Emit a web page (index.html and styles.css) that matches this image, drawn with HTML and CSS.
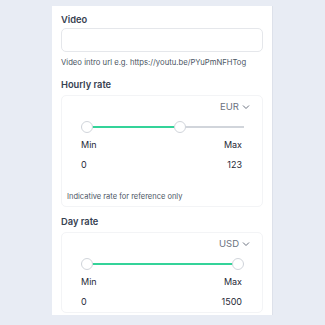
FILE: index.html
```html
<!DOCTYPE html>
<html lang="en">

<head>
    <meta charset="UTF-8">
    <meta name="viewport" content="width=device-width, initial-scale=1.0">
    <title>Rates</title>
    <link rel="stylesheet" href="styles.css">
</head>

<body>
    <div class="card">
        <label class="label">Video</label>
        <input class="input" type="text">
        <p class="help">Video intro url e.g. https://youtu.be/PYuPmNFHTog</p>

        <label class="label">Hourly rate</label>
        <div class="panel">
            <div class="currency">EUR
                <svg width="8" height="8" viewBox="0 0 8 8"><path d="M1 2.5 L4 5.5 L7 2.5" fill="none" stroke="#6b7280" stroke-width="1"/></svg>
            </div>
            <div class="range">
                <div class="track">
                    <div class="fill" style="left: 0%; width: 61.5%"></div>
                    <span class="thumb" style="left: 0%"></span>
                    <span class="thumb" style="left: 61.5%"></span>
                </div>
                <div class="row">
                    <span>Min</span>
                    <span>Max</span>
                </div>
                <div class="row">
                    <span>0</span>
                    <span>123</span>
                </div>
            </div>
            <p class="note">Indicative rate for reference only</p>
        </div>

        <label class="label">Day rate</label>
        <div class="panel">
            <div class="currency">USD
                <svg width="8" height="8" viewBox="0 0 8 8"><path d="M1 2.5 L4 5.5 L7 2.5" fill="none" stroke="#6b7280" stroke-width="1"/></svg>
            </div>
            <div class="range">
                <div class="track">
                    <div class="fill" style="left: 0%; width: 100%"></div>
                    <span class="thumb" style="left: 0%"></span>
                    <span class="thumb" style="left: 100%"></span>
                </div>
                <div class="row">
                    <span>Min</span>
                    <span>Max</span>
                </div>
                <div class="row">
                    <span>0</span>
                    <span>1500</span>
                </div>
            </div>
        </div>
    </div>
</body>

</html>
```

FILE: styles.css
```css
* {
    margin: 0;
    padding: 0;
    box-sizing: border-box;
}

body {
    background: #e8ecf4;
    font-family: Inter, "Liberation Sans", sans-serif;
    height: 325px;
    overflow: hidden;
}

.card {
    margin: 6px 0 0 52px;
    width: 221px;
    height: 309px;
    background: #fff;
    border-right: 1px solid #dde1ea;
    padding: 7px 9px;
    overflow: hidden;
}

.label {
    display: block;
    font-size: 9.3px;
    font-weight: 600;
    color: #374151;
    line-height: 14px;
}

.input {
    display: block;
    width: 202px;
    height: 24px;
    margin-top: 1px;
    border: 1px solid #e5e7eb;
    border-radius: 5px;
}

.help {
    font-size: 7.7px;
    color: #4b5563;
    margin-top: 6px;
    margin-bottom: 10px;
    line-height: 10px;
}

.panel {
    margin-top: 3px;
    width: 202px;
    border: 1px solid #f3f4f6;
    border-radius: 5px;
    padding: 5px 5px 4px;
    margin-bottom: 8px;
}

.currency {
    display: flex;
    justify-content: flex-end;
    align-items: center;
    gap: 3px;
    padding-right: 7px;
    font-size: 9.5px;
    color: #6b7280;
    line-height: 12px;
}

.range {
    padding: 0 15px 0 14px;
    margin-top: 8px;
}

.track {
    position: relative;
    height: 12px;
    margin: 0 4px 0 6px;
}

.track::before {
    content: "";
    position: absolute;
    left: -6px;
    right: -6px;
    top: 5px;
    height: 2px;
    background: #d1d5db;
}

.fill {
    position: absolute;
    top: 5px;
    height: 2px;
    background: #34d399;
}

.thumb {
    position: absolute;
    top: 0;
    width: 12px;
    height: 12px;
    margin-left: -6px;
    border-radius: 50%;
    background: #fff;
    border: 1px solid #d1d5db;
}

.row {
    display: flex;
    justify-content: space-between;
    font-size: 9px;
    color: #1f2937;
    line-height: 12px;
    margin-top: 6px;
}

.row + .row {
    margin-top: 8px;
}

.note {
    font-size: 7.5px;
    color: #4b5563;
    line-height: 10px;
    margin-top: 21px;
}
```
